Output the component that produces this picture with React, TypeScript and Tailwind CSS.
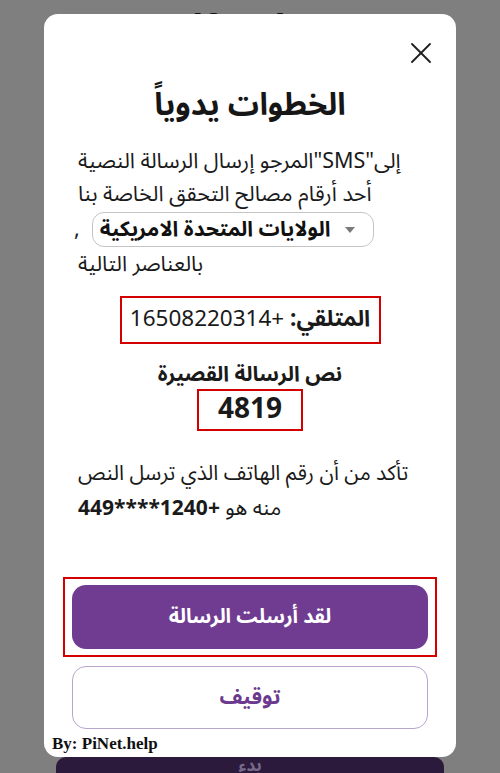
const arabic = "font-['Noto_Sans_Arabic','DejaVu_Sans','Noto_Sans',sans-serif]";

function CloseIcon() {
  return (
    <svg width="20" height="20" viewBox="0 0 20 20" fill="none" stroke="#1f1f1f" strokeWidth="1.8" strokeLinecap="round">
      <path d="M1 1L19 19" />
      <path d="M19 1L1 19" />
    </svg>
  );
}

function CountrySelect() {
  return (
    <div className="flex h-[35px] w-[282px] items-center justify-between rounded-[12px] border border-[#c4c4c4] pl-[7px] pr-[18px]">
      <span className="text-[21px] font-bold text-[#111]">الولايات المتحدة الامريكية</span>
      <svg width="10" height="6" viewBox="0 0 10 6">
        <path d="M0 0H10L5 6Z" fill="#7a7a7a" />
      </svg>
    </div>
  );
}

export default function App() {
  return (
    <div className={`relative h-[773px] w-[500px] overflow-hidden bg-[#7f7f7f] ${arabic}`}>
      {/* page behind the dialog */}
      <div className="flex h-full flex-col">
        <h1 className="ml-[130px] mt-[5px] font-['Liberation_Sans',sans-serif] text-[40px] font-bold leading-[48px] text-[#111]">Verify phone</h1>
        <div className="flex-1" />
        <div className="mx-[56px] mb-[-46px] flex h-[62px] items-end justify-center rounded-[10px] bg-[#2b1a3b] pb-[40px]">
          <span className="text-[17px] font-bold text-[#76688a]">بدء</span>
        </div>
      </div>

      {/* dialog */}
      <div className="absolute left-[44px] top-[14px] flex h-[743px] w-[412px] flex-col rounded-[14px] bg-white text-[#1a1a1a]">
        <div className="flex justify-end pr-[25px] pt-[29px]">
          <CloseIcon />
        </div>

        <h2 className="mt-[22px] text-center text-[31px] font-bold leading-[40px] text-[#161616]">الخطوات يدوياً</h2>

        <div dir="ltr" className="mt-[20px] px-[34px] text-left text-[21.5px] leading-[33px]">
          <div>المرجو إرسال الرسالة النصية"SMS"إلى</div>
          <div>أحد أرقام مصالح التحقق الخاصة بنا</div>
          <div className="flex items-center gap-[12px] py-[1px]">
            <span className="-ml-[4px]">,</span>
            <CountrySelect />
          </div>
          <div>بالعناصر التالية</div>
        </div>

        <div className="mt-[15px] flex justify-center">
          <div dir="ltr" className="flex h-[48px] w-[261px] items-center justify-center border-2 border-[#d40000] text-[22.5px]">
            <span>
              <b>المتلقي:</b> +16508220314
            </span>
          </div>
        </div>

        <div className="mt-[15px] text-center text-[21px] font-bold leading-[30px]">نص الرسالة القصيرة</div>

        <div className="flex justify-center">
          <div className="flex h-[42px] w-[106px] items-center justify-center border-2 border-[#d40000] text-[28px] font-bold">4819</div>
        </div>

        <div dir="ltr" className="mt-[25px] px-[34px] text-left text-[21px] leading-[35px]">
          <div>تأكد من أن رقم الهاتف الذي ترسل النص</div>
          <div>
            منه هو <b>+1240****449</b>
          </div>
        </div>

        <div className="flex-1" />

        <div className="mx-[19px] border-2 border-[#d40000] px-[7px] py-[6px]">
          <button className="flex h-[64px] w-full items-center justify-center rounded-[14px] bg-[#6f3c92] text-[20px] font-bold text-white">
            لقد أرسلت الرسالة
          </button>
        </div>

        <button className="mx-[28px] mb-[28px] mt-[9px] flex h-[63px] items-center justify-center rounded-[14px] border-[1.5px] border-[#b9a4cd] bg-white text-[21px] font-bold text-[#6b3a8e]">
          توقيف
        </button>

        <div className="absolute bottom-[3px] left-[8px] font-['Liberation_Serif',serif] text-[17px] font-bold leading-[20px] text-[#111]">By: PiNet.help</div>
      </div>
    </div>
  );
}
